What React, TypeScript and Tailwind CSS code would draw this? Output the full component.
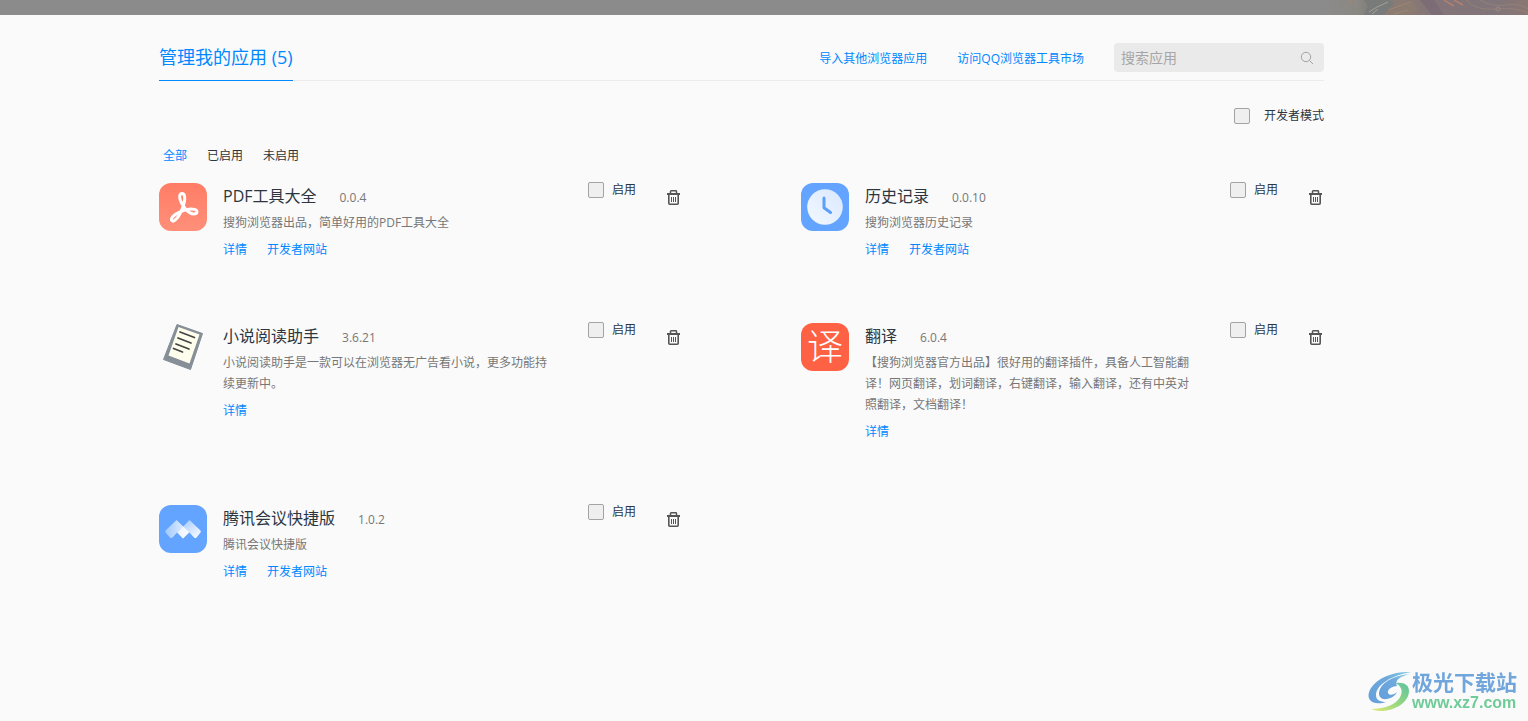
import { useState } from 'react';
import type { ReactNode } from 'react';

type AppInfo = {
  id: string;
  name: string;
  version: string;
  description: string;
  hasSite: boolean;
  icon: ReactNode;
};

const PdfIcon = () => (
  <svg viewBox="0 0 48 48" className="size-12" aria-hidden="true">
    <defs>
      <linearGradient id="pdfBg" x1="0" y1="0" x2="0" y2="1">
        <stop offset="0" stopColor="#ff7d66" />
        <stop offset="1" stopColor="#ff8f79" />
      </linearGradient>
    </defs>
    <rect width="48" height="48" rx="12" fill="url(#pdfBg)" />
    <path
      d="M23 10.5c-2.4 0-2.8 3-1.9 6.200C22 20 24 23 26.500 26c2.500 3 6.500 5.400 9.500 4.800 2.800-.6 2.600-3.700-.4-4.400-4-.9-10 .2-14.600 2.400-3.800 1.800-8 4.600-8.500 7.200-.4 2 1.500 2.800 3.300 1.400 2.900-2.300 5.900-7.700 7.600-12.200 1.500-4 2.700-8.600 2.200-11.800-.3-1.900-1.200-2.900-2.600-2.900z"
      fill="none"
      stroke="#fff"
      strokeWidth="3"
      strokeLinejoin="round"
    />
  </svg>
);

const HistoryIcon = () => (
  <svg viewBox="0 0 48 48" className="size-12" aria-hidden="true">
    <defs>
      <linearGradient id="clockFace" x1="0" y1="1" x2="1" y2="0">
        <stop offset="0" stopColor="#f3f8ff" />
        <stop offset="1" stopColor="#d9e8ff" />
      </linearGradient>
    </defs>
    <rect width="48" height="48" rx="12" fill="#62a4ff" />
    <circle cx="24" cy="24" r="17.800" fill="url(#clockFace)" />
    <path d="M23 15v9.800l6.500 4.700" fill="none" stroke="#5b9ffa" strokeWidth="3" strokeLinecap="round" strokeLinejoin="round" />
  </svg>
);

const NovelIcon = () => (
  <svg viewBox="0 0 48 48" className="size-12" aria-hidden="true">
    <path d="M18 1.500 43.500 10.500 31.500 46.500 4.500 36.500z" fill="#868e97" stroke="#868e97" strokeLinejoin="round" />
    <path d="M19.500 4 40.500 11.500 30.500 40.500 9.500 32.500z" fill="#fffeec" />
    <path d="M21 9l14.500 5.500M19 15l13 5M17 21l13 5M14.500 25.500l9 3.500" stroke="#444" strokeWidth="1.700" strokeLinecap="round" />
  </svg>
);

const TranslateIcon = () => (
  <span
    aria-hidden="true"
    className="flex size-12 items-center justify-center overflow-hidden rounded-xl bg-[#ff6144] text-4xl leading-none font-light text-white"
  >
    译
  </span>
);

const MeetingIcon = () => (
  <svg viewBox="0 0 48 48" className="size-12" aria-hidden="true">
    <defs>
      <linearGradient id="peakLeft" x1="0" y1="0" x2="1" y2="0">
        <stop offset="0" stopColor="#fff" stopOpacity="0.4" />
        <stop offset="1" stopColor="#fff" stopOpacity="0.9" />
      </linearGradient>
      <linearGradient id="peakRight" x1="0" y1="0" x2="1" y2="1">
        <stop offset="0" stopColor="#fff" stopOpacity="0.35" />
        <stop offset="1" stopColor="#fff" />
      </linearGradient>
    </defs>
    <rect width="48" height="48" rx="12" fill="#62a4ff" />
    <path d="M17.500 15 6.500 25.500Q6 26.500 6.500 27.500L11 32.500Q12 33.500 13.500 32.500L18 27.500 24 33.500 30 27z" fill="url(#peakLeft)" />
    <path d="M30.500 15 18.500 27.500 24 33.500 30.500 27.500 35 32.500Q36.500 33.500 37.500 32.500L41.500 27.500Q42 26.500 41.500 25.500z" fill="url(#peakRight)" />
  </svg>
);

const TrashIcon = () => (
  <svg viewBox="0 0 13 15" className="h-[15px] w-[13px]" fill="none" stroke="#555" aria-hidden="true">
    <path d="M3.500 3V1.500Q3.500.8 4.200.8h4.600q.7 0 .7.700V3" strokeWidth="1.500" />
    <path d="M0 4h13" strokeWidth="2" />
    <path d="M1.800 5v8.300q0 .9.900.9h7.600q.9 0 .9-.9V5" strokeWidth="1.600" />
    <path d="M4.500 7v5M6.500 7v5M8.500 7v5" />
  </svg>
);

const apps: AppInfo[] = [
  {
    id: 'pdf',
    name: 'PDF工具大全',
    version: '0.0.4',
    description: '搜狗浏览器出品，简单好用的PDF工具大全',
    hasSite: true,
    icon: <PdfIcon />,
  },
  {
    id: 'history',
    name: '历史记录',
    version: '0.0.10',
    description: '搜狗浏览器历史记录',
    hasSite: true,
    icon: <HistoryIcon />,
  },
  {
    id: 'novel',
    name: '小说阅读助手',
    version: '3.6.21',
    description: '小说阅读助手是一款可以在浏览器无广告看小说，更多功能持续更新中。',
    hasSite: false,
    icon: <NovelIcon />,
  },
  {
    id: 'translate',
    name: '翻译',
    version: '6.0.4',
    description:
      '【搜狗浏览器官方出品】很好用的翻译插件，具备人工智能翻译！网页翻译，划词翻译，右键翻译，输入翻译，还有中英对照翻译，文档翻译！',
    hasSite: false,
    icon: <TranslateIcon />,
  },
  {
    id: 'meeting',
    name: '腾讯会议快捷版',
    version: '1.0.2',
    description: '腾讯会议快捷版',
    hasSite: true,
    icon: <MeetingIcon />,
  },
];

const filters = ['全部', '已启用', '未启用'];

const checkboxClass =
  'size-4 shrink-0 appearance-none rounded-xs border border-[#a3a3a3] bg-[#efefef] checked:border-[#0088ff] checked:bg-[#0088ff]';

const Banner = () => (
  <div className="flex h-[15px] justify-end bg-[#8b8b8b]">
    <svg viewBox="0 0 208 15" className="h-[15px] w-52" aria-hidden="true">
      <defs>
        <linearGradient id="artBg" x1="0" y1="0" x2="1" y2="0">
          <stop offset="0" stopColor="#8b8b8b" />
          <stop offset="0.180" stopColor="#8b8883" />
          <stop offset="0.250" stopColor="#7e7c79" />
          <stop offset="0.400" stopColor="#8a7b74" />
          <stop offset="0.550" stopColor="#837479" />
          <stop offset="0.850" stopColor="#80757a" />
          <stop offset="1" stopColor="#8a7672" />
        </linearGradient>
      </defs>
      <rect width="208" height="15" fill="url(#artBg)" />
      <path d="M44 0l4 6-4 9h20L74 3 68 0z" fill="#797b7b" />
      <path d="M49 12l8-5 11-5M52 14l6-5" stroke="#a2a29d" fill="none" />
      <path d="M64 15L76 4l16-4 6 9-8 6z" fill="#8c7b70" />
      <path d="M68 10l12-4 10-4M74 14l14-4" stroke="#9c8678" fill="none" />
      <path d="M100 0l12 15h12L114 0z" fill="#7b6c76" />
      <path d="M124 0l10 6M134 0l9 5" stroke="#b0816f" strokeWidth="1.500" fill="none" />
      <path d="M146 0q10 11 30 9t32 4M160 0q12 7 26 5t22 4" stroke="#938078" fill="none" />
      <circle cx="178" cy="9" r="2" stroke="#9d8880" fill="none" />
      <path d="M31 0v2M30 4v1" stroke="#c97b5b" />
    </svg>
  </div>
);

const AppCard = ({ app }: { app: AppInfo }) => (
  <article className="flex items-start">
    <div className="mr-4 shrink-0">{app.icon}</div>
    <div className="min-w-0 flex-1 pr-9">
      <div className="flex items-baseline gap-[23px]">
        <h2 className="text-base leading-[26px] text-[#2d3640]">{app.name}</h2>
        <span className="text-xs text-[#777]">{app.version}</span>
      </div>
      <p className="mt-[3px] text-xs leading-[21px] text-[#777]">{app.description}</p>
      <div className="mt-1.5 flex gap-5 text-xs leading-[21px] text-[#0088ff]">
        <a href="#detail">详情</a>
        {app.hasSite && <a href="#site">开发者网站</a>}
      </div>
    </div>
    <div className="flex shrink-0 items-start pr-0.5">
      <label className="-mt-px mr-[31px] flex items-center gap-2 text-xs leading-4 text-[#2d3640]">
        <input type="checkbox" className={checkboxClass} />
        启用
      </label>
      <button type="button" aria-label={`删除${app.name}`} className="mt-[7px]">
        <TrashIcon />
      </button>
    </div>
  </article>
);

const Watermark = () => (
  <div className="fixed right-[11px] bottom-2 flex items-center">
    <svg viewBox="6 4 44 43" className="h-[43px] w-11" aria-hidden="true">
      <defs>
        <linearGradient id="swirlTop" x1="0" y1="1" x2="1" y2="0">
          <stop offset="0" stopColor="#649fdb" />
          <stop offset="0.600" stopColor="#6da9dd" />
          <stop offset="1" stopColor="#85cde0" />
        </linearGradient>
        <linearGradient id="swirlBottom" x1="0" y1="1" x2="1" y2="0">
          <stop offset="0" stopColor="#e2ea72" />
          <stop offset="0.500" stopColor="#95d683" />
          <stop offset="1" stopColor="#5cc3a0" />
        </linearGradient>
      </defs>
      <path d="M49 6C33 5 16 11 9 22c-5 8-2 14 5 15 4 .6 7 0 10-1-6 0-10-2-10-7C14 19 30 9 49 6z" fill="url(#swirlTop)" />
      <path d="M48 8C36 9 22 14 18 23c-3 7 1 11 7 10 5-1 9-4 10-7-3 3-8 4-9 1-1-4 5-7 9-7C32 14 39 10 48 8z" fill="url(#swirlTop)" />
      <path d="M34 17c8-1 13 2 13 8 0 11-14 20-28 20-4 0-7-1-10-2 14 0 27-5 30-14 2-6-1-9-5-12z" fill="url(#swirlBottom)" />
    </svg>
    <div>
      <p className="text-[21px] leading-[22px] font-bold text-[#70a6dc]">极光下载站</p>
      <p className="font-['Liberation_Sans',sans-serif] text-base leading-5 font-bold text-[#6fcb97]">www.xz7.com</p>
    </div>
  </div>
);

const App = () => {
  const [filter, setFilter] = useState('全部');

  return (
    <div className="min-h-screen bg-[#fafafa] font-['Open_Sans','Noto_Sans_CJK_SC',sans-serif]">
      <Banner />
      <main className="pr-[204px] pl-[159px]">
        <header className="flex items-end border-b border-b-[#ebebeb] pt-7">
          <h1 className="-mb-px border-b border-b-[#0088ff] pb-[9px] text-lg leading-7 text-[#0088ff]">管理我的应用 (5)</h1>
          <nav className="mr-[30px] mb-[7px] ml-auto flex gap-[30px] text-xs leading-7 text-[#0088ff]">
            <a href="#import">导入其他浏览器应用</a>
            <a href="#market">访问QQ浏览器工具市场</a>
          </nav>
          <div className="mb-2 flex h-[29px] w-[210px] items-center rounded bg-[#eaeaea] pr-2.5 pl-[7px]">
            <input
              type="search"
              aria-label="搜索应用"
              placeholder="搜索应用"
              className="min-w-0 flex-1 bg-transparent text-sm leading-5 text-[#333] outline-none placeholder:text-[#a6a6a6]"
            />
            <button type="button" aria-label="搜索">
              <svg viewBox="0 0 14 14" className="size-3.5" fill="none" stroke="#a3a3a3" aria-hidden="true">
                <circle cx="6" cy="6" r="4.700" />
                <path d="M9.500 9.500l3.500 3.500" />
              </svg>
            </button>
          </div>
        </header>

        <div className="mt-[27px] flex justify-end">
          <label className="flex items-center gap-3.5 text-xs leading-4 text-[#2d3640]">
            <input type="checkbox" className={checkboxClass} />
            开发者模式
          </label>
        </div>

        <div className="mt-6 flex gap-5 pl-1 text-xs leading-4">
          {filters.map((item) => (
            <button
              key={item}
              type="button"
              onClick={() => setFilter(item)}
              className={item === filter ? 'text-[#0088ff]' : 'text-[#2d3640]'}
            >
              {item}
            </button>
          ))}
        </div>

        <section className="mt-[19px] grid grid-cols-2 gap-x-[119px] gap-y-[63px]">
          {apps.map((app) => (
            <AppCard key={app.id} app={app} />
          ))}
        </section>
      </main>
      <Watermark />
    </div>
  );
};

export default App;
